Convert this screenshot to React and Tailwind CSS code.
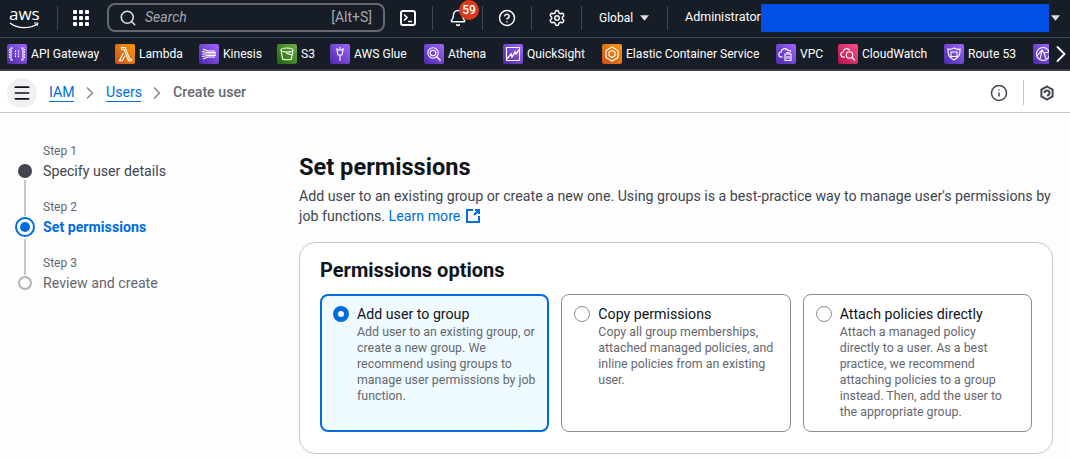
import { ChevronRight, Menu, Search, Bell, Settings, CircleHelp, Info } from "lucide-react";

const ic = { fill: "none", stroke: "white", strokeWidth: 1.1 };

const services = [
  { name: "API Gateway", w: "w-[108px]", bg: "from-[#4d27a8] to-[#a166ff]", icon: <><path d="M6 4H4v12h2M14 4h2v12h-2" {...ic} /><path d="M2.5 5v10M17.5 5v10" {...ic} strokeDasharray="1.5 1" /><path d="M8.5 6.5v7M11.5 6.5v7" {...ic} strokeDasharray="1.5 1" /></> },
  { name: "Lambda", w: "w-[84px]", bg: "from-[#c8511b] to-[#ff9900]", icon: <path d="M6.5 3.5h3.7l4.4 11.8h2v1.5h-3.1L9 5.2H6.5zM8.2 9.2l-3.8 7.6h3l2.5-5" {...ic} /> },
  { name: "Kinesis", w: "w-[78px]", bg: "from-[#4d27a8] to-[#a166ff]", icon: <path d="M4 5l5 2h7M3 7.5l6 1h8M3 10h14M3 12.5l6-1h8M4 15l5-2h7" {...ic} /> },
  { name: "S3", w: "w-[53px]", bg: "from-[#1b660f] to-[#6cae3e]", icon: <><ellipse cx="10" cy="6" rx="6" ry="2" {...ic} /><path d="M4 6l1.6 9c.3 1 8.5 1 8.8 0L16 6" {...ic} /><path d="M9 9l6 2" {...ic} /></> },
  { name: "AWS Glue", w: "w-[94px]", bg: "from-[#4d27a8] to-[#a166ff]", icon: <path d="M10 3v3M7 6h6l-1 5h-4zM10 11v6M7 4v2M13 4v2" {...ic} /> },
  { name: "Athena", w: "w-[79px]", bg: "from-[#4d27a8] to-[#a166ff]", icon: <><circle cx="9" cy="9" r="5.2" {...ic} /><circle cx="9" cy="9" r="2.8" {...ic} /><path d="M12.5 12.5l4 4" {...ic} strokeWidth="1.6" /></> },
  { name: "QuickSight", w: "w-[99px]", bg: "from-[#4d27a8] to-[#a166ff]", icon: <><path d="M3.5 3.5h13v13h-13z" {...ic} /><path d="M4 15l4-5 1 3 3-5 1 2 3-4" {...ic} strokeWidth="1.4" /></> },
  { name: "Elastic Container Service", w: "w-[174px]", bg: "from-[#c8511b] to-[#ff9900]", icon: <><path d="M10 3l6 3.5v7L10 17l-6-3.5v-7z" {...ic} /><path d="M10 6.5l3 1.8v3.4l-3 1.8-3-1.8V8.3z" {...ic} /></> },
  { name: "VPC", w: "w-[62px]", bg: "from-[#4d27a8] to-[#a166ff]", icon: <><path d="M7 13H5.5a2.5 2.5 0 0 1-.3-5 3.5 3.5 0 0 1 6.6-1.5A2.5 2.5 0 0 1 15 8" {...ic} /><path d="M9 10h6v6.5H9zM11 10V8.5h2V10M11 12v3M13 12v3" {...ic} /></> },
  { name: "CloudWatch", w: "w-[106px]", bg: "from-[#b0084d] to-[#ff4f8b]", icon: <><path d="M7 13H5.5a2.5 2.5 0 0 1-.3-5 3.5 3.5 0 0 1 6.6-1.5" {...ic} /><circle cx="11.5" cy="11" r="3.2" {...ic} /><path d="M14 13.5l3 3" {...ic} /></> },
  { name: "Route 53", w: "w-[89px]", bg: "from-[#4d27a8] to-[#a166ff]", icon: <><path d="M4 5c2 1 4 0 6-1 2 1 4 2 6 1 0 5 0 8-6 11C4 13 4 10 4 5z" {...ic} /><path d="M7 8h6v4.5H7z" {...ic} /></> },
  { name: "", w: "w-[16px]", bg: "from-[#4d27a8] to-[#a166ff]", icon: <><circle cx="10" cy="10" r="6.5" {...ic} /><path d="M4 12l5-6 2 3 5-1M9 6l-2 9M11 9l2 6" {...ic} /></> },
];

function ServiceIcon({ bg, children }) {
  return (
    <span className={`flex h-5 w-5 shrink-0 items-center justify-center rounded-[2px] bg-linear-to-tr ${bg}`}>
      <svg viewBox="0 0 20 20" className="h-5 w-5">{children}</svg>
    </span>
  );
}

function Divider() {
  return <span className="block h-6 w-px shrink-0 bg-[#414750]" />;
}

function Step({ label, title, state, last }) {
  return (
    <div className="flex gap-[8px]">
      <div className="flex h-[56px] w-[20px] shrink-0 flex-col items-center pt-[22px]">
        {state === "done" && <span className="h-[14px] w-[14px] shrink-0 rounded-full bg-[#424650]" />}
        {state === "active" && (
          <span className="-mt-[3px] flex h-[20px] w-[20px] shrink-0 items-center justify-center rounded-full border-2 border-[#006ce0]">
            <span className="h-[10px] w-[10px] rounded-full bg-[#006ce0]" />
          </span>
        )}
        {state === "todo" && <span className="h-[14px] w-[14px] shrink-0 rounded-full border-2 border-[#b4b4bb]" />}
        {!last && <span className="mt-[2px] h-[36px] w-[2px] shrink-0 bg-[#c6c6cd]" />}
      </div>
      <div className="h-[56px] pt-[1px]">
        <div className="text-[12px] leading-[16px] text-[#656871]">{label}</div>
        <div className={`mt-[2px] text-[14.2px] leading-[20px] ${state === "active" ? "font-bold text-[#006ce0]" : state === "done" ? "text-[#424650]" : "text-[#656871]"}`}>
          {title}
        </div>
      </div>
    </div>
  );
}

function Option({ title, text, selected }) {
  return (
    <div className={`min-w-0 rounded-lg ${selected ? "border-2 border-[#006ce0] bg-[#f0fbff] pt-[9px] pr-[10px] pl-[11px]" : "border border-[#8c8c94] bg-white pt-[10px] pr-[14px] pl-[12px]"}`}>
      <div className="flex gap-[8px]">
        {selected ? (
          <span className="mt-[1px] h-4 w-4 shrink-0 rounded-full border-[5px] border-[#006ce0] bg-white" />
        ) : (
          <span className="mt-[1px] h-4 w-4 shrink-0 rounded-full border border-[#8c8c94] bg-white" />
        )}
        <div>
          <div className="text-[14.2px] leading-[19px] text-[#0f141a]">{title}</div>
          <p className="text-[12.4px] leading-[16px] text-[#656871]">{text}</p>
        </div>
      </div>
    </div>
  );
}

export default function App() {
  return (
    <div className="h-[461px] w-[1070px] overflow-hidden bg-[#fdfdfd] font-['Roboto',sans-serif]">
      {/* Top nav */}
      <div className="flex h-[38px] items-center border-b border-[#414750] bg-[#161d26] pb-[2px] text-white">
        <div className="flex w-[57px] shrink-0 pl-[9px]">
          <span className="relative h-[24px] w-[30px] text-center font-['Open_Sans',sans-serif] text-[17px] leading-[16px]">
            aws
            <svg viewBox="0 0 30 8" className="absolute bottom-0 left-0 h-[8px] w-[30px]">
              <path d="M1 1c8 6 20 6 27 1" fill="none" stroke="white" strokeWidth="1.4" />
              <path d="M25 1h4l-1 3" fill="none" stroke="white" strokeWidth="1" />
            </svg>
          </span>
        </div>
        <Divider />
        <div className="ml-[15px] grid h-4 w-4 shrink-0 grid-cols-3 gap-[2px]">
          {[...Array(9)].map((_, i) => <span key={i} className="rounded-[1px] bg-white" />)}
        </div>
        <div className="ml-[18px] flex h-[29px] w-[278px] shrink-0 items-center rounded-lg border-2 border-[#656871] px-[11px]">
          <Search size={18} strokeWidth={2} className="-ml-[1px] text-[#dedee3]" />
          <span className="ml-[8px] flex-1 text-[14px] text-[#a7a7ae] italic">Search</span>
          <span className="text-[14px] text-[#a7a7ae]">[Alt+S]</span>
        </div>
        <span className="ml-[15px] flex h-[16px] w-[16px] shrink-0 items-center justify-center rounded-[3px] border-2 border-white">
          <svg viewBox="0 0 12 12" className="h-[12px] w-[12px]">
            <path d="M2 2.5L5 5.5 2 8.5M6 9.5h4" fill="none" stroke="white" strokeWidth="1.6" />
          </svg>
        </span>
        <span className="ml-[16px]"><Divider /></span>
        <span className="relative ml-[16px] w-[18px] shrink-0">
          <Bell size={18} strokeWidth={2} />
          <span className="absolute -top-[9px] left-[10px] flex h-[20px] w-[20px] items-center justify-center rounded-full bg-[#db3a1d] text-[12px] font-medium">59</span>
        </span>
        <span className="ml-[15px]"><Divider /></span>
        <CircleHelp size={18} strokeWidth={2} className="ml-[15px] shrink-0" />
        <span className="ml-[15px]"><Divider /></span>
        <Settings size={18} strokeWidth={2} className="ml-[16px] shrink-0" />
        <span className="ml-[15px]"><Divider /></span>
        <span className="ml-[17px] w-[36px] shrink-0 text-[12px]">Global</span>
        <svg viewBox="0 0 10 6" className="ml-[5px] h-[6px] w-[9px] shrink-0"><path d="M0 0h10L5 6z" fill="#dedee3" /></svg>
        <span className="ml-[18px]"><Divider /></span>
        <span className="ml-[17px] w-[76px] shrink-0 text-[12.5px] whitespace-nowrap">Administrator</span>
        <span className="h-[28px] w-[288px] shrink-0 bg-[#0050e4]" />
        <svg viewBox="0 0 10 6" className="ml-[2px] h-[6px] w-[9px] shrink-0"><path d="M0 0h10L5 6z" fill="#dedee3" /></svg>
      </div>

      {/* Favorites bar */}
      <div className="flex h-[33px] items-center border-b-2 border-[#3b4048] bg-[#161d26] pt-[1px] pl-[7px] text-white">
        <div className="flex w-[1042px] shrink-0 overflow-hidden">
          {services.map((s) => (
            <div key={s.w + s.name} className={`flex shrink-0 items-center gap-[4px] ${s.w}`}>
              <ServiceIcon bg={s.bg}>{s.icon}</ServiceIcon>
              {s.name && <span className="text-[12.1px] whitespace-nowrap">{s.name}</span>}
            </div>
          ))}
        </div>
        <ChevronRight size={28} strokeWidth={1.6} className="-ml-[2px] shrink-0" />
      </div>

      {/* Breadcrumbs */}
      <div className="flex h-[42px] items-center border-b border-[#c6c6cd] bg-white pt-[2px] pr-[15px] pl-[7px]">
        <span className="flex h-[30px] w-[30px] items-center justify-center rounded-full bg-[#f0f0f4]">
          <Menu size={20} strokeWidth={2} className="text-[#0f141a]" />
        </span>
        <a className="ml-[12px] w-[25px] border-b border-[#006ce0] text-[14.2px] leading-[18px] text-[#006ce0]">IAM</a>
        <ChevronRight size={20} strokeWidth={2} className="mx-[6px] text-[#8c8c94]" />
        <a className="w-[35px] border-b border-[#006ce0] text-[14.2px] leading-[18px] text-[#006ce0]">Users</a>
        <ChevronRight size={20} strokeWidth={2} className="mx-[6px] text-[#8c8c94]" />
        <span className="text-[14.2px] font-medium text-[#656871]">Create user</span>
        <Info size={18} strokeWidth={2} className="ml-auto text-[#424650]" />
        <span className="mx-[15px] h-[25px] w-px bg-[#c6c6cd]" />
        <svg viewBox="0 0 16 16" className="h-4 w-4">
          <path d="M8 1.5l5.6 3.2v6.6L8 14.5l-5.6-3.2V4.7L8 1.5z" fill="none" stroke="#424650" strokeWidth="2" />
          <path d="M5.5 8a2.5 2.5 0 1 1 2.5 2.5" fill="none" stroke="#424650" strokeWidth="2" />
        </svg>
      </div>

      {/* Page */}
      <div className="flex pr-[17px] pl-[15px]">
        <div className="w-[284px] shrink-0 pt-[29px]">
          <Step label="Step 1" title="Specify user details" state="done" />
          <Step label="Step 2" title="Set permissions" state="active" />
          <Step label="Step 3" title="Review and create" state="todo" last />
        </div>
        <div className="min-w-0 flex-1 pt-[39px]">
          <h1 className="text-[23.6px] leading-[30px] font-bold text-[#0f141a]">Set permissions</h1>
          <p className="mt-[4px] text-[14.2px] leading-[20px] text-[#424650]">
            Add user to an existing group or create a new one. Using groups is a best-practice way to manage user's permissions by job functions.{" "}
            <a className="text-[#006ce0]">Learn more</a>
            <svg viewBox="0 0 16 16" className="ml-[5px] inline h-[16px] w-[16px] align-[-3px]">
              <path d="M8 2H2v12h12V8M9 7l5-5M10 2h4v4" fill="none" stroke="#006ce0" strokeWidth="2" />
            </svg>
          </p>
          <div className="mt-[16px] h-[212px] rounded-2xl border border-[#c6c6cd] bg-white px-[20px] pt-[13px]">
            <h2 className="text-[20px] leading-[28px] font-bold text-[#0f141a]">Permissions options</h2>
            <div className="mt-[10px] grid h-[138px] grid-cols-3 gap-[12px]">
              <Option selected title="Add user to group" text="Add user to an existing group, or create a new group. We recommend using groups to manage user permissions by job function." />
              <Option title="Copy permissions" text="Copy all group memberships, attached managed policies, and inline policies from an existing user." />
              <Option title="Attach policies directly" text="Attach a managed policy directly to a user. As a best practice, we recommend attaching policies to a group instead. Then, add the user to the appropriate group." />
            </div>
          </div>
        </div>
      </div>
    </div>
  );
}
